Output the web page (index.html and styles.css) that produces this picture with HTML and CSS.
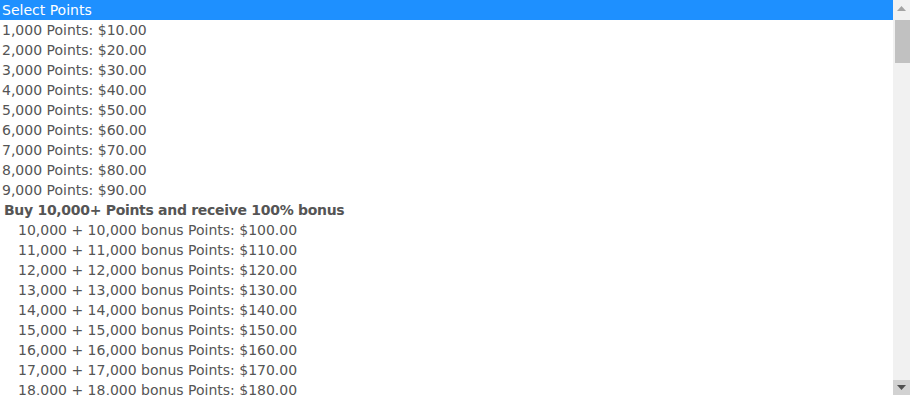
FILE: index.html
```html
<!DOCTYPE html>
<html lang="en">
<head>
    <meta charset="UTF-8">
    <title>Select Points</title>
    <link rel="stylesheet" href="styles.css">
</head>
<body>
    <div class="dropdown">
        <div class="options">
            <div class="option selected">Select Points</div>
            <div class="option">1,000 Points: $10.00</div>
            <div class="option">2,000 Points: $20.00</div>
            <div class="option">3,000 Points: $30.00</div>
            <div class="option">4,000 Points: $40.00</div>
            <div class="option">5,000 Points: $50.00</div>
            <div class="option">6,000 Points: $60.00</div>
            <div class="option">7,000 Points: $70.00</div>
            <div class="option">8,000 Points: $80.00</div>
            <div class="option">9,000 Points: $90.00</div>
            <div class="group-label">Buy 10,000+ Points and receive 100% bonus</div>
            <div class="option in-group">10,000 + 10,000 bonus Points: $100.00</div>
            <div class="option in-group">11,000 + 11,000 bonus Points: $110.00</div>
            <div class="option in-group">12,000 + 12,000 bonus Points: $120.00</div>
            <div class="option in-group">13,000 + 13,000 bonus Points: $130.00</div>
            <div class="option in-group">14,000 + 14,000 bonus Points: $140.00</div>
            <div class="option in-group">15,000 + 15,000 bonus Points: $150.00</div>
            <div class="option in-group">16,000 + 16,000 bonus Points: $160.00</div>
            <div class="option in-group">17,000 + 17,000 bonus Points: $170.00</div>
            <div class="option in-group">18,000 + 18,000 bonus Points: $180.00</div>
        </div>
        <div class="scrollbar">
            <div class="scroll-btn">
                <svg width="9" height="5" viewBox="0 0 9 5"><path d="M0 5 L4.5 0 L9 5 Z" fill="#a3a3a3"/></svg>
            </div>
            <div class="thumb"></div>
            <div class="track"></div>
            <div class="scroll-btn down">
                <svg width="9" height="5" viewBox="0 0 9 5"><path d="M0 0 L9 0 L4.5 5 Z" fill="#505050"/></svg>
            </div>
        </div>
    </div>
</body>
</html>
```

FILE: styles.css
```css
html, body {
    margin: 0;
    height: 100%;
    overflow: hidden;
    background: #ffffff;
}

.dropdown {
    display: flex;
    height: 395px;
    font-family: 'DejaVu Sans', sans-serif;
    font-size: 14px;
    color: #555555;
}

.options {
    flex: 1;
    overflow: hidden;
}

.option {
    height: 20px;
    line-height: 20px;
    padding-left: 2px;
    white-space: nowrap;
}

.option.selected {
    background: #1e90ff;
    color: #ffffff;
}

.option.in-group {
    padding-left: 18px;
}

.group-label {
    height: 20px;
    line-height: 20px;
    padding-left: 4px;
    font-weight: bold;
    letter-spacing: -0.3px;
    white-space: nowrap;
}

.scrollbar {
    width: 17px;
    background: #f1f1f1;
    display: flex;
    flex-direction: column;
}

.scroll-btn {
    height: 17px;
    display: flex;
    align-items: center;
    justify-content: center;
}

.scroll-btn.down {
    height: 15px;
    background: #d2d2d2;
}

.thumb {
    height: 43px;
    margin: 3px 0 0 2px;
    background: #c1c1c1;
}

.track {
    flex: 1;
}
```
